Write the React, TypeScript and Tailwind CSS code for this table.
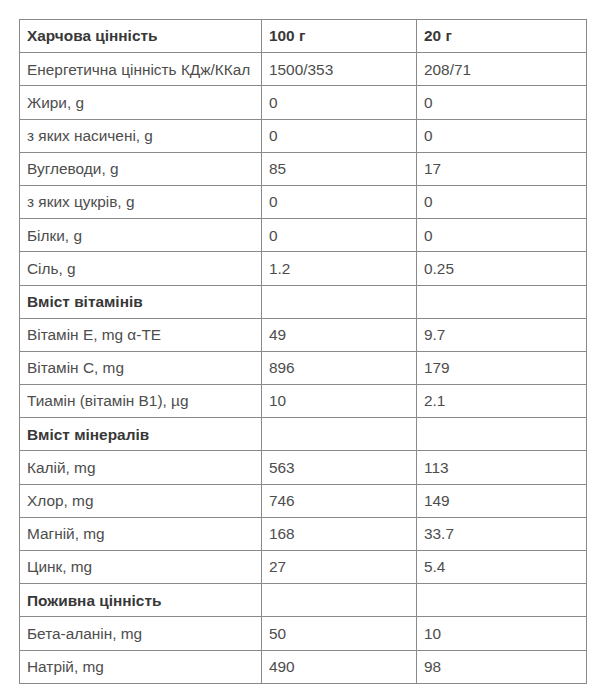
import React from 'react';

type Row = { label: string; a: string; b: string; bold?: boolean };

const rows: Row[] = [
  { label: 'Харчова цінність', a: '100 г', b: '20 г', bold: true },
  { label: 'Енергетична цінність КДж/ККал', a: '1500/353', b: '208/71' },
  { label: 'Жири, g', a: '0', b: '0' },
  { label: 'з яких насичені, g', a: '0', b: '0' },
  { label: 'Вуглеводи, g', a: '85', b: '17' },
  { label: 'з яких цукрів, g', a: '0', b: '0' },
  { label: 'Білки, g', a: '0', b: '0' },
  { label: 'Сіль, g', a: '1.2', b: '0.25' },
  { label: 'Вміст вітамінів', a: '', b: '', bold: true },
  { label: 'Вітамін Е, mg α-TE', a: '49', b: '9.7' },
  { label: 'Вітамін С, mg', a: '896', b: '179' },
  { label: 'Тиамін (вітамін В1), µg', a: '10', b: '2.1' },
  { label: 'Вміст мінералів', a: '', b: '', bold: true },
  { label: 'Калій, mg', a: '563', b: '113' },
  { label: 'Хлор, mg', a: '746', b: '149' },
  { label: 'Магній, mg', a: '168', b: '33.7' },
  { label: 'Цинк, mg', a: '27', b: '5.4' },
  { label: 'Поживна цінність', a: '', b: '', bold: true },
  { label: 'Бета-аланін, mg', a: '50', b: '10' },
  { label: 'Натрій, mg', a: '490', b: '98' },
];

export default function App() {
  return (
    <div className="w-[604px] h-[700px] bg-white pt-[19px] pl-[19px] font-['Liberation_Sans',Arial,sans-serif] text-[15.4px] text-[#4d4d4d]">
      <table className="table-fixed border-collapse w-[567px]">
        <colgroup>
          <col className="w-[242px]" />
          <col className="w-[155px]" />
          <col className="w-[170px]" />
        </colgroup>
        <tbody>
          {rows.map((r, i) => (
            <tr key={i} className={r.bold ? 'font-bold text-[#383838]' : ''}>
              <td className="border border-[#8a8a8a] h-[33.2px] px-[7px] py-0 leading-none whitespace-nowrap">{r.label}</td>
              <td className="border border-[#8a8a8a] h-[33.2px] px-[7px] py-0 leading-none">{r.a}</td>
              <td className="border border-[#8a8a8a] h-[33.2px] px-[7px] py-0 leading-none">{r.b}</td>
            </tr>
          ))}
        </tbody>
      </table>
    </div>
  );
}
